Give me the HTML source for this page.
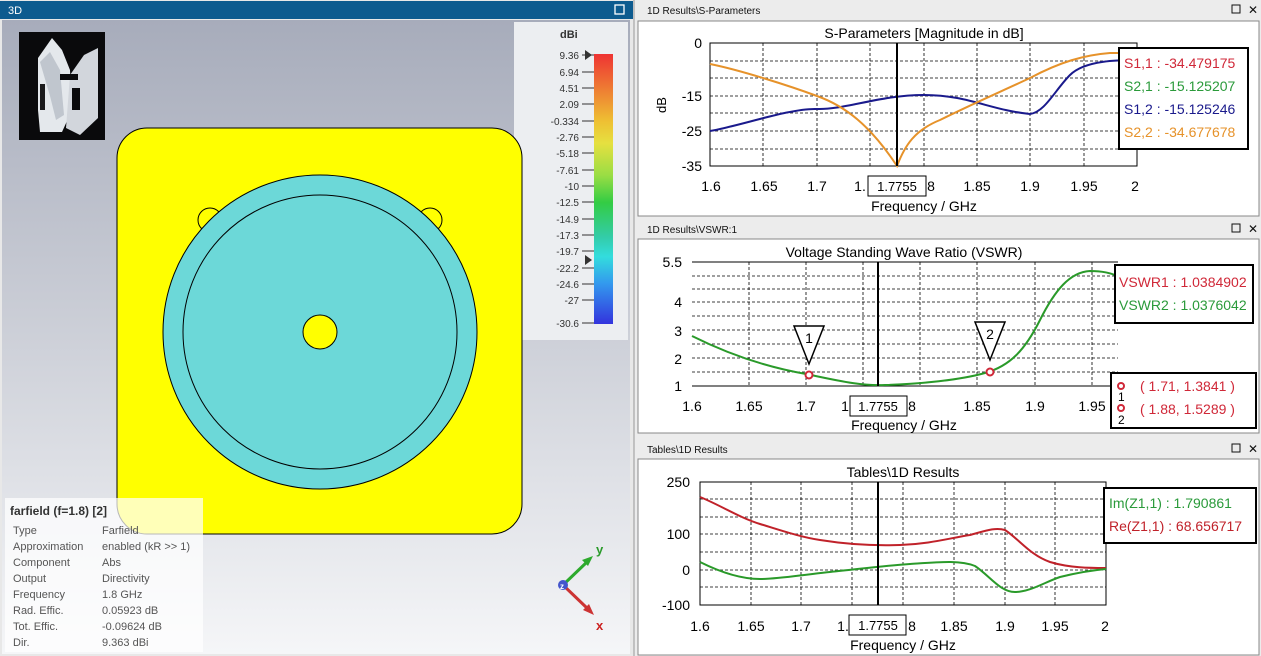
<!DOCTYPE html>
<html><head><meta charset="utf-8"><style>
html,body{margin:0;padding:0;width:1261px;height:656px;overflow:hidden;background:#f0f0f0}
svg{display:block}
text{font-family:"Liberation Sans",sans-serif}
</style></head><body>
<svg width="1261" height="656" viewBox="0 0 1261 656" xmlns="http://www.w3.org/2000/svg">
<defs>
<linearGradient id="bg" x1="0" y1="0" x2="0" y2="1">
<stop offset="0" stop-color="#a7acbb"/><stop offset="0.45" stop-color="#c9ccd5"/><stop offset="1" stop-color="#f5f6f8"/>
</linearGradient>
<linearGradient id="cb" x1="0" y1="0" x2="0" y2="1">
<stop offset="0" stop-color="#ee3333"/><stop offset="0.12" stop-color="#ee7733"/><stop offset="0.25" stop-color="#eec033"/><stop offset="0.33" stop-color="#e6e040"/><stop offset="0.45" stop-color="#99dd44"/><stop offset="0.55" stop-color="#33cc44"/><stop offset="0.68" stop-color="#33ccaa"/><stop offset="0.75" stop-color="#33dddd"/><stop offset="0.85" stop-color="#3399ee"/><stop offset="1" stop-color="#3333dd"/>
</linearGradient>
</defs>
<rect x="0" y="0" width="634" height="656" fill="#e8e8e8"/>
<rect x="0" y="1" width="633" height="18" fill="#0d5b8f"/>
<text x="8" y="14" font-size="11" fill="#fff">3D</text>
<rect x="615" y="5" width="9" height="9" fill="none" stroke="#fff" stroke-width="1.3"/>
<rect x="2" y="20" width="628" height="634" fill="url(#bg)"/>
<rect x="514" y="22" width="114" height="318" fill="#eceef1"/>
<!-- thumbnail -->
<rect x="19" y="32" width="86" height="108" fill="#0a0a0c"/>
<polygon points="38,58 52,38 62,50 70,70 72,110 62,132 40,132 38,110" fill="#e4e8ec"/>
<polygon points="70,75 84,55 98,48 98,118 80,135 66,128" fill="#d2d6dc"/>
<polygon points="40,62 50,52 60,70 64,115 56,120 50,96" fill="#c0c6ce"/>
<rect x="60" y="74" width="18" height="6" fill="#0a0a0c"/>
<rect x="72" y="88" width="8" height="22" fill="#0a0a0c"/>
<rect x="40" y="84" width="5" height="26" fill="#1a1a1c"/>
<!-- geometry -->
<rect x="117" y="128" width="405" height="406" rx="30" fill="#ffff00" stroke="#000" stroke-width="1"/>
<circle cx="210" cy="220" r="12" fill="#ffff00" stroke="#000" stroke-width="1"/>
<circle cx="430" cy="220" r="12" fill="#ffff00" stroke="#000" stroke-width="1"/>
<circle cx="320" cy="332" r="157" fill="#6cd8d8" stroke="#000" stroke-width="1"/>
<circle cx="320" cy="332" r="137" fill="none" stroke="#000" stroke-width="1"/>
<circle cx="320" cy="332" r="17" fill="#ffff00" stroke="#000" stroke-width="1"/>
<!-- colorbar -->
<text x="560" y="38" font-size="11" font-weight="bold" fill="#333">dBi</text>
<rect x="594" y="54" width="19" height="270" fill="url(#cb)"/>
<g font-size="10" fill="#333" text-anchor="end">
<text x="579" y="59">9.36</text><text x="579" y="76">6.94</text><text x="579" y="92">4.51</text><text x="579" y="108">2.09</text><text x="579" y="125">-0.334</text><text x="579" y="141">-2.76</text><text x="579" y="157">-5.18</text><text x="579" y="174">-7.61</text><text x="579" y="190">-10</text><text x="579" y="206">-12.5</text><text x="579" y="223">-14.9</text><text x="579" y="239">-17.3</text><text x="579" y="255">-19.7</text><text x="579" y="272">-22.2</text><text x="579" y="288">-24.6</text><text x="579" y="304">-27</text><text x="579" y="327">-30.6</text>
</g>
<g stroke="#333" stroke-width="1">
<line x1="582" y1="55" x2="594" y2="55"/><line x1="582" y1="72" x2="594" y2="72"/><line x1="582" y1="88" x2="594" y2="88"/><line x1="582" y1="104" x2="594" y2="104"/><line x1="582" y1="121" x2="594" y2="121"/><line x1="582" y1="137" x2="594" y2="137"/><line x1="582" y1="153" x2="594" y2="153"/><line x1="582" y1="170" x2="594" y2="170"/><line x1="582" y1="186" x2="594" y2="186"/><line x1="582" y1="202" x2="594" y2="202"/><line x1="582" y1="219" x2="594" y2="219"/><line x1="582" y1="235" x2="594" y2="235"/><line x1="582" y1="251" x2="594" y2="251"/><line x1="582" y1="268" x2="594" y2="268"/><line x1="582" y1="284" x2="594" y2="284"/><line x1="582" y1="300" x2="594" y2="300"/><line x1="582" y1="323" x2="594" y2="323"/>
</g>
<polygon points="585,50 592,55 585,60" fill="#333"/>
<polygon points="585,255 592,260 585,265" fill="#333"/>
<!-- info box -->
<rect x="5" y="498" width="198" height="154" fill="#fff" fill-opacity="0.72"/>
<text x="10" y="515" font-size="12" font-weight="bold" fill="#333">farfield (f=1.8) [2]</text>
<g font-size="11" fill="#555">
<text x="13" y="534">Type</text><text x="102" y="534">Farfield</text>
<text x="13" y="550">Approximation</text><text x="102" y="550">enabled (kR &gt;&gt; 1)</text>
<text x="13" y="566">Component</text><text x="102" y="566">Abs</text>
<text x="13" y="582">Output</text><text x="102" y="582">Directivity</text>
<text x="13" y="598">Frequency</text><text x="102" y="598">1.8 GHz</text>
<text x="13" y="614">Rad. Effic.</text><text x="102" y="614">0.05923 dB</text>
<text x="13" y="630">Tot. Effic.</text><text x="102" y="630">-0.09624 dB</text>
<text x="13" y="646">Dir.</text><text x="102" y="646">9.363 dBi</text>
</g>
<!-- axes -->
<line x1="563" y1="585" x2="588" y2="561" stroke="#2daa2d" stroke-width="3"/>
<polygon points="593,556 582,560 588,566" fill="#2daa2d"/>
<line x1="563" y1="585" x2="588" y2="609" stroke="#cc3333" stroke-width="3"/>
<polygon points="594,615 583,610 589,604" fill="#cc3333"/>
<circle cx="563" cy="585" r="5" fill="#4455cc"/>
<text x="560" y="589" font-size="8" font-weight="bold" fill="#fff">z</text>
<text x="596" y="554" font-size="13" font-weight="bold" fill="#2a9a2a" font-family="Liberation Serif">y</text>
<text x="596" y="630" font-size="13" font-weight="bold" fill="#cc2222" font-family="Liberation Serif">x</text>

<!-- right side -->
<rect x="634" y="0" width="627" height="656" fill="#ececec"/>
<line x1="634" y1="0" x2="634" y2="656" stroke="#999"/>
<g font-size="10" fill="#111">
<text x="647" y="14">1D Results\S-Parameters</text>
<text x="647" y="233">1D Results\VSWR:1</text>
<text x="647" y="453">Tables\1D Results</text>
</g>
<g fill="none" stroke="#111" stroke-width="1">
<rect x="1232" y="5" width="8" height="8"/><rect x="1232" y="224" width="8" height="8"/><rect x="1232" y="444" width="8" height="8"/>
</g>
<g font-size="12" fill="#111"><text x="1248" y="14">✕</text><text x="1248" y="233">✕</text><text x="1248" y="453">✕</text></g>
<rect x="638" y="21" width="621" height="195" fill="#fff" stroke="#888"/>
<rect x="638" y="239" width="621" height="194" fill="#fff" stroke="#888"/>
<rect x="638" y="459" width="621" height="196" fill="#fff" stroke="#888"/>

<!-- Panel 1 -->
<g stroke="#000" stroke-width="0.8" stroke-dasharray="3,2">
<line x1="763" y1="43" x2="763" y2="166"/><line x1="817" y1="43" x2="817" y2="166"/><line x1="870" y1="43" x2="870" y2="166"/><line x1="924" y1="43" x2="924" y2="166"/><line x1="977" y1="43" x2="977" y2="166"/><line x1="1030" y1="43" x2="1030" y2="166"/><line x1="1084" y1="43" x2="1084" y2="166"/>
<line x1="710" y1="61" x2="1137" y2="61"/><line x1="710" y1="78" x2="1137" y2="78"/><line x1="710" y1="96" x2="1137" y2="96"/><line x1="710" y1="113" x2="1137" y2="113"/><line x1="710" y1="131" x2="1137" y2="131"/><line x1="710" y1="149" x2="1137" y2="149"/>
</g>
<rect x="710" y="43" width="427" height="123" fill="none" stroke="#000"/>
<text x="924" y="38" font-size="14" text-anchor="middle">S-Parameters [Magnitude in dB]</text>
<g font-size="14" text-anchor="end"><text x="702" y="48">0</text><text x="702" y="101">-15</text><text x="702" y="136">-25</text><text x="702" y="171">-35</text></g>
<text x="666" y="105" font-size="13" transform="rotate(-90 666 105)" text-anchor="middle">dB</text>
<g font-size="14" text-anchor="middle"><text x="711" y="191">1.6</text><text x="764" y="191">1.65</text><text x="817" y="191">1.7</text><text x="860" y="191">1.</text><text x="931" y="191">8</text><text x="977" y="191">1.85</text><text x="1030" y="191">1.9</text><text x="1084" y="191">1.95</text><text x="1135" y="191">2</text></g>
<text x="924" y="211" font-size="14" text-anchor="middle">Frequency / GHz</text>
<path d="M710,131 C740,126 790,108 817,109 S880,95 924,95 S990,110 1030,114 C1045,112 1055,90 1070,75 S1120,60 1137,60" fill="none" stroke="#1a1a8c" stroke-width="2"/>
<path d="M710,64 C740,70 790,86 817,96 C845,106 870,125 897,166 C905,145 915,130 940,120 C970,105 1000,92 1030,78 C1060,62 1084,55 1110,53 L1137,53" fill="none" stroke="#e6922a" stroke-width="2"/>
<line x1="897" y1="43" x2="897" y2="166" stroke="#000" stroke-width="2"/>
<rect x="868" y="176" width="58" height="20" fill="#fff" stroke="#000"/>
<text x="897" y="191" font-size="13" text-anchor="middle">1.7755</text>
<rect x="1119" y="48" width="129" height="101" fill="#fff" stroke="#000" stroke-width="2"/>
<g font-size="14"><text x="1124" y="68" fill="#d02838">S1,1 : -34.479175</text><text x="1124" y="91" fill="#2a9a3a">S2,1 : -15.125207</text><text x="1124" y="114" fill="#1a1a8c">S1,2 : -15.125246</text><text x="1124" y="137" fill="#e6922a">S2,2 : -34.677678</text></g>

<!-- Panel 2 -->
<g stroke="#000" stroke-width="0.8" stroke-dasharray="3,2">
<line x1="749" y1="262" x2="749" y2="386"/><line x1="806" y1="262" x2="806" y2="386"/><line x1="863" y1="262" x2="863" y2="386"/><line x1="920" y1="262" x2="920" y2="386"/><line x1="977" y1="262" x2="977" y2="386"/><line x1="1035" y1="262" x2="1035" y2="386"/><line x1="1092" y1="262" x2="1092" y2="386"/>
<line x1="692" y1="276" x2="1118" y2="276"/><line x1="692" y1="289" x2="1118" y2="289"/><line x1="692" y1="302" x2="1118" y2="302"/><line x1="692" y1="316" x2="1118" y2="316"/><line x1="692" y1="330" x2="1118" y2="330"/><line x1="692" y1="344" x2="1118" y2="344"/><line x1="692" y1="358" x2="1118" y2="358"/><line x1="692" y1="372" x2="1118" y2="372"/>
</g>
<line x1="692" y1="262" x2="1118" y2="262" stroke="#000"/><line x1="692" y1="386" x2="1118" y2="386" stroke="#000"/>
<text x="904" y="257" font-size="14" text-anchor="middle">Voltage Standing Wave Ratio (VSWR)</text>
<g font-size="14" text-anchor="end"><text x="682" y="267">5.5</text><text x="682" y="307">4</text><text x="682" y="336">3</text><text x="682" y="364">2</text><text x="682" y="391">1</text></g>
<g font-size="14" text-anchor="middle"><text x="692" y="411">1.6</text><text x="749" y="411">1.65</text><text x="806" y="411">1.7</text><text x="847" y="411">1.</text><text x="912" y="411">8</text><text x="977" y="411">1.85</text><text x="1035" y="411">1.9</text><text x="1092" y="411">1.95</text></g>
<text x="904" y="430" font-size="14" text-anchor="middle">Frequency / GHz</text>
<path d="M692,336 C720,350 760,366 806,374 C840,381 860,386 885,385 C920,384 960,380 985,373 C1010,366 1025,350 1040,320 C1055,290 1070,272 1090,271 C1105,271 1112,274 1118,276" fill="none" stroke="#2a9a2a" stroke-width="2"/>
<line x1="878" y1="262" x2="878" y2="386" stroke="#000" stroke-width="2"/>
<rect x="850" y="396" width="57" height="20" fill="#fff" stroke="#000"/>
<text x="878" y="411" font-size="13" text-anchor="middle">1.7755</text>
<polygon points="794,326 824,326 809,364" fill="#fff" stroke="#000" stroke-width="1.5"/>
<text x="809" y="343" font-size="14" text-anchor="middle">1</text>
<polygon points="975,322 1005,322 990,360" fill="#fff" stroke="#000" stroke-width="1.5"/>
<text x="990" y="339" font-size="14" text-anchor="middle">2</text>
<circle cx="809" cy="375" r="3.5" fill="#fff" stroke="#d02838" stroke-width="2"/>
<circle cx="990" cy="372" r="3.5" fill="#fff" stroke="#d02838" stroke-width="2"/>
<rect x="1115" y="265" width="138" height="58" fill="#fff" stroke="#000" stroke-width="2"/>
<g font-size="14"><text x="1119" y="287" fill="#d02838">VSWR1 : 1.0384902</text><text x="1119" y="310" fill="#2a9a3a">VSWR2 : 1.0376042</text></g>
<rect x="1111" y="373" width="145" height="55" fill="#fff" stroke="#000" stroke-width="2"/>
<circle cx="1121" cy="386" r="3" fill="none" stroke="#d02838" stroke-width="2"/>
<circle cx="1121" cy="408" r="3" fill="none" stroke="#d02838" stroke-width="2"/>
<g font-size="12"><text x="1118" y="401">1</text><text x="1118" y="424">2</text></g>
<g font-size="14" fill="#d02838"><text x="1140" y="391">( 1.71, 1.3841 )</text><text x="1140" y="414">( 1.88, 1.5289 )</text></g>

<!-- Panel 3 -->
<g stroke="#000" stroke-width="0.8" stroke-dasharray="3,2">
<line x1="751" y1="482" x2="751" y2="605"/><line x1="801" y1="482" x2="801" y2="605"/><line x1="852" y1="482" x2="852" y2="605"/><line x1="903" y1="482" x2="903" y2="605"/><line x1="954" y1="482" x2="954" y2="605"/><line x1="1005" y1="482" x2="1005" y2="605"/><line x1="1055" y1="482" x2="1055" y2="605"/>
<line x1="700" y1="499" x2="1106" y2="499"/><line x1="700" y1="517" x2="1106" y2="517"/><line x1="700" y1="534" x2="1106" y2="534"/><line x1="700" y1="552" x2="1106" y2="552"/><line x1="700" y1="570" x2="1106" y2="570"/><line x1="700" y1="587" x2="1106" y2="587"/>
</g>
<rect x="700" y="482" width="406" height="123" fill="none" stroke="#000"/>
<text x="903" y="477" font-size="14" text-anchor="middle">Tables\1D Results</text>
<g font-size="14" text-anchor="end"><text x="690" y="487">250</text><text x="690" y="539">100</text><text x="690" y="575">0</text><text x="690" y="610">-100</text></g>
<g font-size="14" text-anchor="middle"><text x="700" y="631">1.6</text><text x="751" y="631">1.65</text><text x="801" y="631">1.7</text><text x="843" y="631">1.</text><text x="912" y="631">8</text><text x="954" y="631">1.85</text><text x="1005" y="631">1.9</text><text x="1055" y="631">1.95</text><text x="1105" y="631">2</text></g>
<text x="903" y="650" font-size="14" text-anchor="middle">Frequency / GHz</text>
<path d="M700,497 C720,505 740,518 760,524 C780,530 800,537 820,540 C845,544 870,546 900,545 C930,544 950,538 970,535 C985,531 995,527 1005,530 C1020,540 1030,555 1050,562 C1070,568 1090,568 1106,568" fill="none" stroke="#c0222a" stroke-width="2"/>
<path d="M700,562 C720,572 740,579 760,579 C780,579 800,575 830,572 C860,569 880,566 910,564 C940,562 960,560 975,566 C990,576 1000,592 1015,592 C1030,592 1045,582 1060,577 C1080,572 1095,570 1106,569" fill="none" stroke="#2a9a2a" stroke-width="2"/>
<line x1="878" y1="482" x2="878" y2="605" stroke="#000" stroke-width="2"/>
<rect x="849" y="615" width="57" height="20" fill="#fff" stroke="#000"/>
<text x="878" y="630" font-size="13" text-anchor="middle">1.7755</text>
<rect x="1104" y="488" width="152" height="55" fill="#fff" stroke="#000" stroke-width="2"/>
<g font-size="14"><text x="1109" y="508" fill="#2a9a3a">Im(Z1,1) : 1.790861</text><text x="1109" y="531" fill="#c0222a">Re(Z1,1) : 68.656717</text></g>
</svg>
</body></html>
